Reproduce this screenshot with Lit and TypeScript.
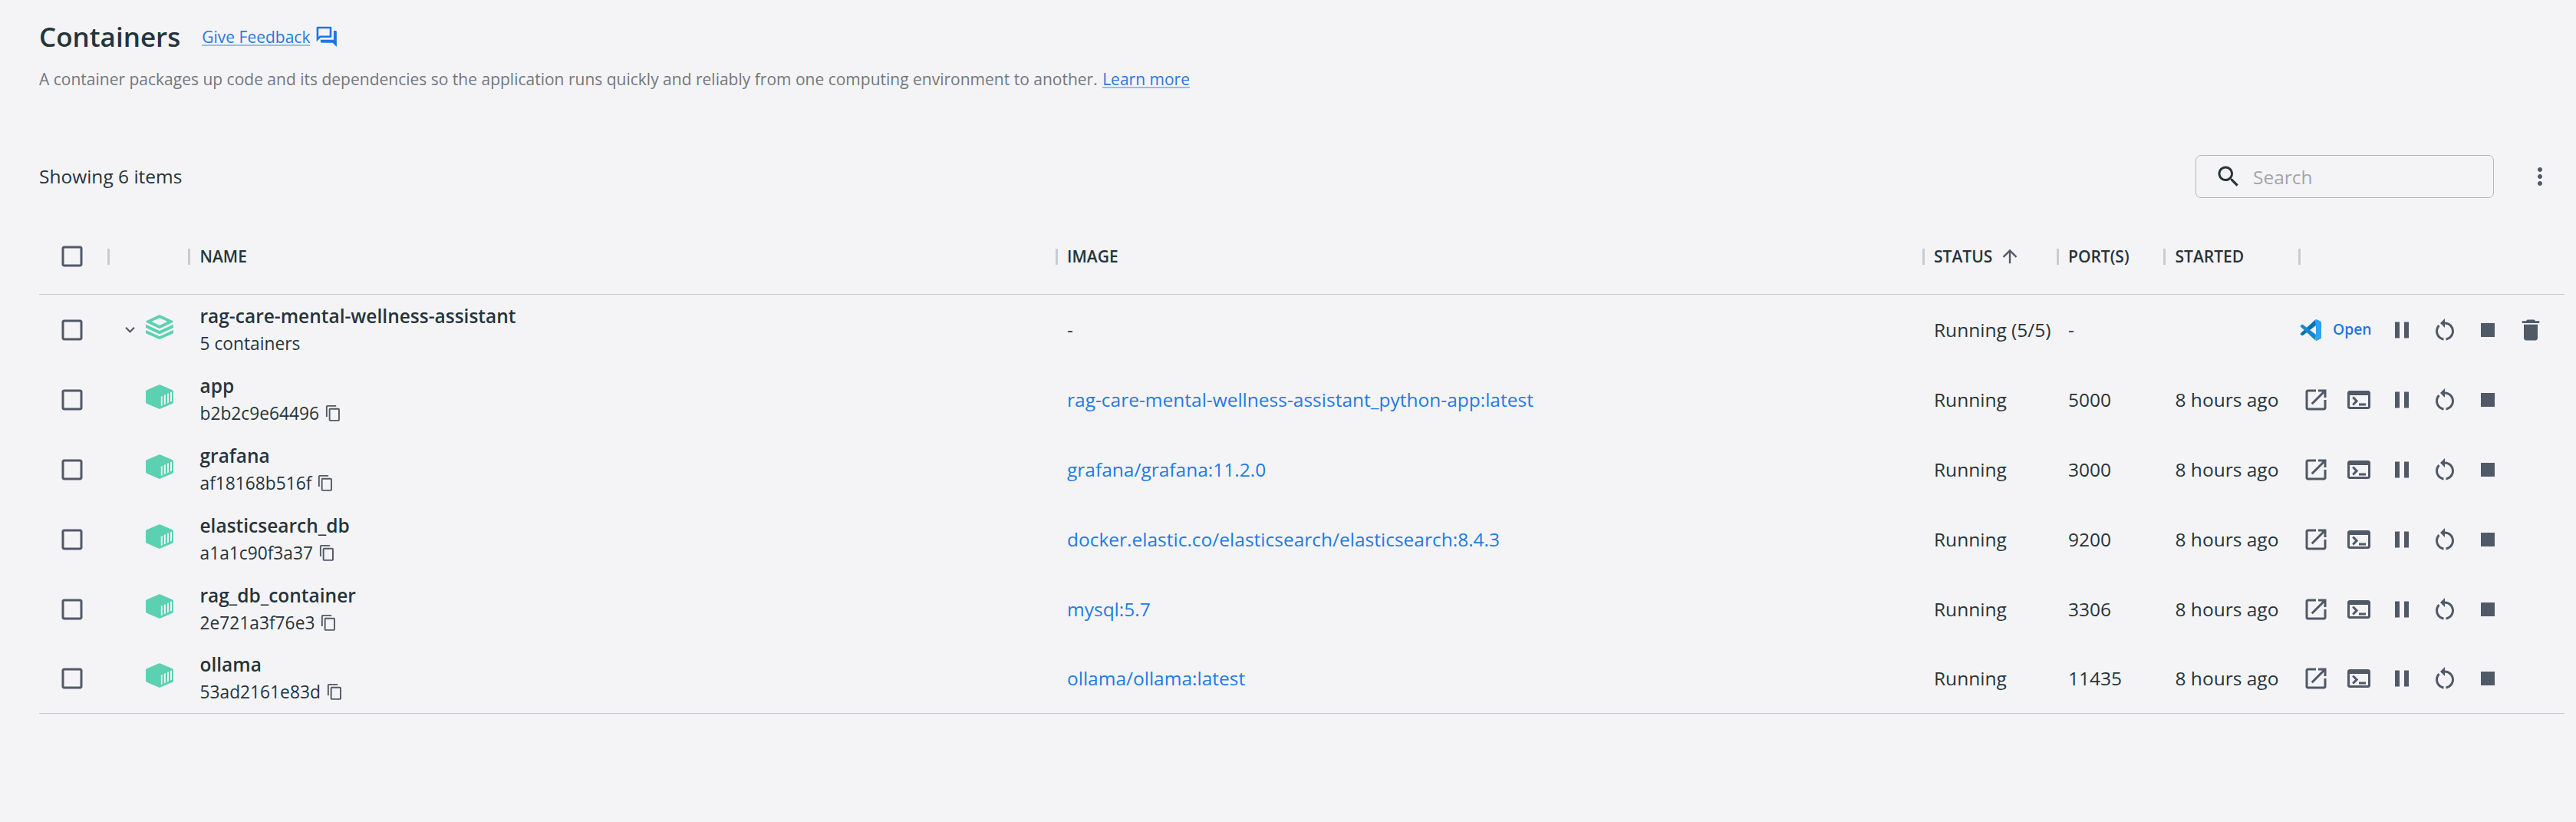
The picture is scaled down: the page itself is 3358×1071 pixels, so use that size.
import { LitElement, html, css, svg, nothing } from "lit";
import { customElement, property } from "lit/decorators.js";

const PATHS: Record<string, string> = {
  checkbox: "M19 5v14H5V5h14m0-2H5c-1.1 0-2 .9-2 2v14c0 1.1.9 2 2 2h14c1.1 0 2-.9 2-2V5c0-1.100-.9-2-2-2z",
  feedback: "M15 4v7H5.170L4 12.170V4h11m1-2H3c-.55 0-1 .45-1 1v14l4-4h10c.55 0 1-.45 1-1V3c0-.55-.45-1-1-1zm5 4h-2v9H6v2c0 .55.45 1 1 1h11l4 4V7c0-.55-.45-1-1-1z",
  search: "M15.500 14h-.79l-.28-.27C15.410 12.590 16 11.110 16 9.500 16 5.910 13.090 3 9.500 3S3 5.910 3 9.500 5.910 16 9.500 16c1.610 0 3.090-.59 4.230-1.570l.27.28v.79l5 4.990L20.490 19l-4.990-5zm-6 0C7.010 14 5 11.990 5 9.500S7.010 5 9.500 5 14 7.010 14 9.500 11.990 14 9.500 14z",
  more: "M12 8c1.100 0 2-.9 2-2s-.9-2-2-2-2 .9-2 2 .9 2 2 2zm0 2c-1.100 0-2 .9-2 2s.9 2 2 2 2-.9 2-2-.9-2-2-2zm0 6c-1.100 0-2 .9-2 2s.9 2 2 2 2-.9 2-2-.9-2-2-2z",
  arrowUp: "m4 12 1.410 1.410L11 7.830V20h2V7.830l5.580 5.590L20 12l-8-8-8 8z",
  chevron: "M16.590 8.590 12 13.170 7.410 8.590 6 10l6 6 6-6z",
  copy: "M16 1H4c-1.100 0-2 .9-2 2v14h2V3h12V1zm3 4H8c-1.100 0-2 .9-2 2v14c0 1.100.9 2 2 2h11c1.100 0 2-.9 2-2V7c0-1.100-.9-2-2-2zm0 16H8V7h11v14z",
  open: "M19 19H5V5h7V3H5c-1.110 0-2 .9-2 2v14c0 1.100.89 2 2 2h14c1.100 0 2-.9 2-2v-7h-2v7zM14 3v2h3.590l-9.830 9.830 1.410 1.410L19 6.410V10h2V3h-7z",
  terminal: "M20 4H4c-1.110 0-2 .9-2 2v12c0 1.100.89 2 2 2h16c1.100 0 2-.9 2-2V6c0-1.100-.89-2-2-2zm0 14H4V8h16v10zm-2-1h-6v-2h6v2zM7.500 17l-1.410-1.410L8.670 13l-2.590-2.590L7.500 9l4 4-4 4z",
  pause: "M6 19h4V5H6v14zm8-14v14h4V5h-4z",
  restart: "M12 5V2L8 6l4 4V7c3.310 0 6 2.690 6 6 0 2.970-2.170 5.430-5 5.910v2.020c3.950-.49 7-3.850 7-7.930 0-4.420-3.580-8-8-8zm-6 8c0-1.650.67-3.150 1.760-4.240L6.340 7.340C4.900 8.790 4 10.790 4 13c0 4.080 3.050 7.440 7 7.930v-2.020c-2.830-.48-5-2.940-5-5.910z",
  stop: "M6 6h12v12H6z",
  trash: "M6 19c0 1.100.9 2 2 2h8c1.100 0 2-.9 2-2V7.200H6V19zM19.500 4.200H16c-.3-.8-.8-1.200-1.600-1.200H9.600C8.800 3 8.300 3.400 8 4.200H4.500V6h15z",
};

@customElement("ui-icon")
export class UiIcon extends LitElement {
  @property() name = "stop";

  static styles = css`
    :host { display: block; flex: none; width: 36px; height: 36px; }
    svg { display: block; width: 100%; height: 100%; fill: currentColor; }
  `;

  render() {
    return html`<svg viewBox="0 0 24 24" aria-hidden="true">${svg`<path d=${PATHS[this.name]}></path>`}</svg>`;
  }
}

interface Item {
  name: string;
  detail: string;
  image: string;
  status: string;
  port: string;
  started: string;
  group?: boolean;
}

const ITEMS: Item[] = [
  { name: "rag-care-mental-wellness-assistant", detail: "5 containers", image: "-", status: "Running (5/5)", port: "-", started: "", group: true },
  { name: "app", detail: "b2b2c9e64496", image: "rag-care-mental-wellness-assistant_python-app:latest", status: "Running", port: "5000", started: "8 hours ago" },
  { name: "grafana", detail: "af18168b516f", image: "grafana/grafana:11.2.0", status: "Running", port: "3000", started: "8 hours ago" },
  { name: "elasticsearch_db", detail: "a1a1c90f3a37", image: "docker.elastic.co/elasticsearch/elasticsearch:8.4.3", status: "Running", port: "9200", started: "8 hours ago" },
  { name: "rag_db_container", detail: "2e721a3f76e3", image: "mysql:5.7", status: "Running", port: "3306", started: "8 hours ago" },
  { name: "ollama", detail: "53ad2161e83d", image: "ollama/ollama:latest", status: "Running", port: "11435", started: "8 hours ago" },
];

const stackIcon = html`<svg class="kind" viewBox="0 0 36 32">
  <path fill-rule="evenodd" d="M17 .4q1-.5 2 0L35 8q1.600 1 0 2L19 17.800q-1 .5-2 0L1 10q-1.600-1 0-2zM18 4.200 7.600 9 18 13.900 28.400 9z"></path>
  <path d="M0 12.800 18 21l18-8.200v4.200l-17 7.900q-1 .5-2 0L0 17z"></path>
  <path d="M0 20 18 28.200 36 20v4.200l-17 7.600q-1 .5-2 0L0 24.200z"></path>
</svg>`;

const containerIcon = html`<svg class="kind" viewBox="0 0 36 32">
  <path d="M16.800.5q1.200-.6 2.400 0L34.800 7.300Q36 7.900 36 9.200v13.600q0 1.300-1.200 1.900l-15.600 6.900q-1.200.6-2.400 0L1.200 24.700Q0 24.100 0 22.800V9.200Q0 7.900 1.200 7.300z"></path>
  <path class="slats" d="M19.800 15.700l1.900-.8v12.300l-1.900.8zM23.900 13.900l1.900-.8v12.300l-1.900.8zM28 12.100l1.900-.8v12.300l-1.900.8zM32.100 10.300l1.900-.8v12.300l-1.900.8z"></path>
</svg>`;

const codeIcon = html`<svg class="code" viewBox="0 0 28 28">
  <path fill="#0f6fb3" d="M20.500.3 1 18.200q-.9.8 0 1.600l1.500 1.300q.7.500 1.500 0L21 8z"></path>
  <path fill="#1788ce" d="M20.500 27.700 1 9.800q-.9-.8 0-1.600l1.500-1.300q.7-.5 1.500 0L21 20z"></path>
  <path fill="#2ea3ee" d="M20.500.2q.7-.4 1.500 0l5 2.400q1 .5 1 1.600v19.600q0 1.100-1 1.600l-5 2.400q-.8.400-1.500 0 .5-.3.500-1V1.200q0-.7-.5-1z"></path>
</svg>`;

@customElement("app-root")
export class AppRoot extends LitElement {
  static styles = css`
    :host {
      display: block;
      box-sizing: border-box;
      min-height: 1071px;
      padding: 20px 15px 0 51px;
      background: #f4f4f6;
      color: #27343a;
      font: 400 24.5px/35px "Open Sans", "Noto Sans", sans-serif;
    }
    .heading { display: flex; align-items: center; height: 56px; }
    h1 { margin: 0; font-size: 35px; line-height: 56px; font-weight: 600; }
    .feedback { display: flex; align-items: center; gap: 6px; margin-left: 28px; color: #1d76e8; font-size: 21px; }
    .feedback .link { margin-top: 2px; }
    .feedback ui-icon { width: 31.5px; height: 31.5px; }
    .link { color: #2a78e0; text-decoration: none; border-bottom: 2px solid #93bdf2; line-height: 20px; display: inline-block; }
    .intro { margin: 9px 0 0; height: 36px; line-height: 36px; font-size: 21px; color: #74777c; }
    .intro .link { margin-left: 1px; }
    .toolbar { display: flex; align-items: center; height: 56px; margin-top: 81px; }
    .count { flex: 1; padding-bottom: 2px; }
    .search { box-sizing: border-box; display: flex; align-items: center; gap: 14px; width: 389px; height: 56px; padding-left: 24px; border: 1px solid #b4b6bb; border-radius: 7px; color: #a3a5a9; }
    .search ui-icon { color: #27343a; }
    .more { margin: 0 14px 0 42px; color: #505968; }
    .row { display: grid; grid-template-columns: 88.5px 105.5px 1130.5px 1130px 175px 139.5px 176px 1fr; height: 91px; align-items: center; }
    .row:last-child { height: 89px; padding-bottom: 1px; border-bottom: 1px solid #c4c8d1; }
    .head { height: 98px; margin-top: 27px; border-bottom: 1px solid #c4c8d1; font-size: 21px; font-weight: 600; }
    .head .cell { display: flex; align-items: center; gap: 12.5px; }
    .head .cell::before { content: ""; width: 3px; height: 21px; background: #c9cbd3; }
    .arrow { width: 28px; height: 28px; color: #505968; margin-left: -4px; }
    .check { padding-left: 25px; color: #505968; }
    .marks { display: flex; align-items: center; justify-content: flex-end; gap: 8px; padding-right: 19px; height: 70px; }
    .marks ui-icon { width: 25px; height: 25px; color: #505968; }
    .kind { width: 36px; height: 32px; margin-bottom: 7px; fill: #5bd1b2; }
    .slats { fill: #f4f4f6; }
    .text { padding-left: 15.5px; white-space: nowrap; }
    .name { font-weight: 600; }
    .detail { display: flex; align-items: center; gap: 7px; padding-top: 1px; font-size: 22.75px; }
    .detail ui-icon { width: 22.75px; height: 22.75px; color: #505968; }
    .image { color: #1f7be6; }
    .actions { display: flex; align-items: center; gap: 20px; padding-left: 5px; color: #505968; }
    .editor { display: flex; align-items: center; gap: 15px; width: 95px; margin-left: -3px; color: #1d76e8; font-size: 19.25px; font-weight: 600; }
    .editor span { padding-bottom: 2px; }
    .code { width: 28px; height: 28px; flex: none; }
  `;

  private renderRow(item: Item) {
    return html`<div class="row">
      <div class="check"><ui-icon name="checkbox"></ui-icon></div>
      <div class="marks">
        ${item.group ? html`<ui-icon name="chevron"></ui-icon>${stackIcon}` : containerIcon}
      </div>
      <div class="text">
        <div class="name">${item.name}</div>
        <div class="detail">${item.detail}${item.group ? nothing : html`<ui-icon name="copy"></ui-icon>`}</div>
      </div>
      <div class="text ${item.group ? "" : "image"}">${item.image}</div>
      <div class="text">${item.status}</div>
      <div class="text">${item.port}</div>
      <div class="text">${item.started}</div>
      <div class="actions">
        ${item.group
          ? html`<div class="editor">${codeIcon}<span>Open</span></div>`
          : html`<ui-icon name="open"></ui-icon><ui-icon name="terminal"></ui-icon>`}
        <ui-icon name="pause"></ui-icon>
        <ui-icon name="restart"></ui-icon>
        <ui-icon name="stop"></ui-icon>
        ${item.group ? html`<ui-icon name="trash"></ui-icon>` : nothing}
      </div>
    </div>`;
  }

  render() {
    return html`
      <div class="heading">
        <h1>Containers</h1>
        <div class="feedback"><a class="link">Give Feedback</a><ui-icon name="feedback"></ui-icon></div>
      </div>
      <p class="intro">
        A container packages up code and its dependencies so the application runs quickly and reliably from one computing environment to another.
        <a class="link">Learn more</a>
      </p>
      <div class="toolbar">
        <div class="count">Showing 6 items</div>
        <div class="search"><ui-icon name="search"></ui-icon><span>Search</span></div>
        <ui-icon class="more" name="more"></ui-icon>
      </div>
      <div class="table">
        <div class="row head">
          <div class="check"><ui-icon name="checkbox"></ui-icon></div>
          <div class="cell"></div>
          <div class="cell">NAME</div>
          <div class="cell">IMAGE</div>
          <div class="cell">STATUS<ui-icon class="arrow" name="arrowUp"></ui-icon></div>
          <div class="cell">PORT(S)</div>
          <div class="cell">STARTED</div>
          <div class="cell"></div>
        </div>
        ${ITEMS.map((item) => this.renderRow(item))}
      </div>
    `;
  }
}
